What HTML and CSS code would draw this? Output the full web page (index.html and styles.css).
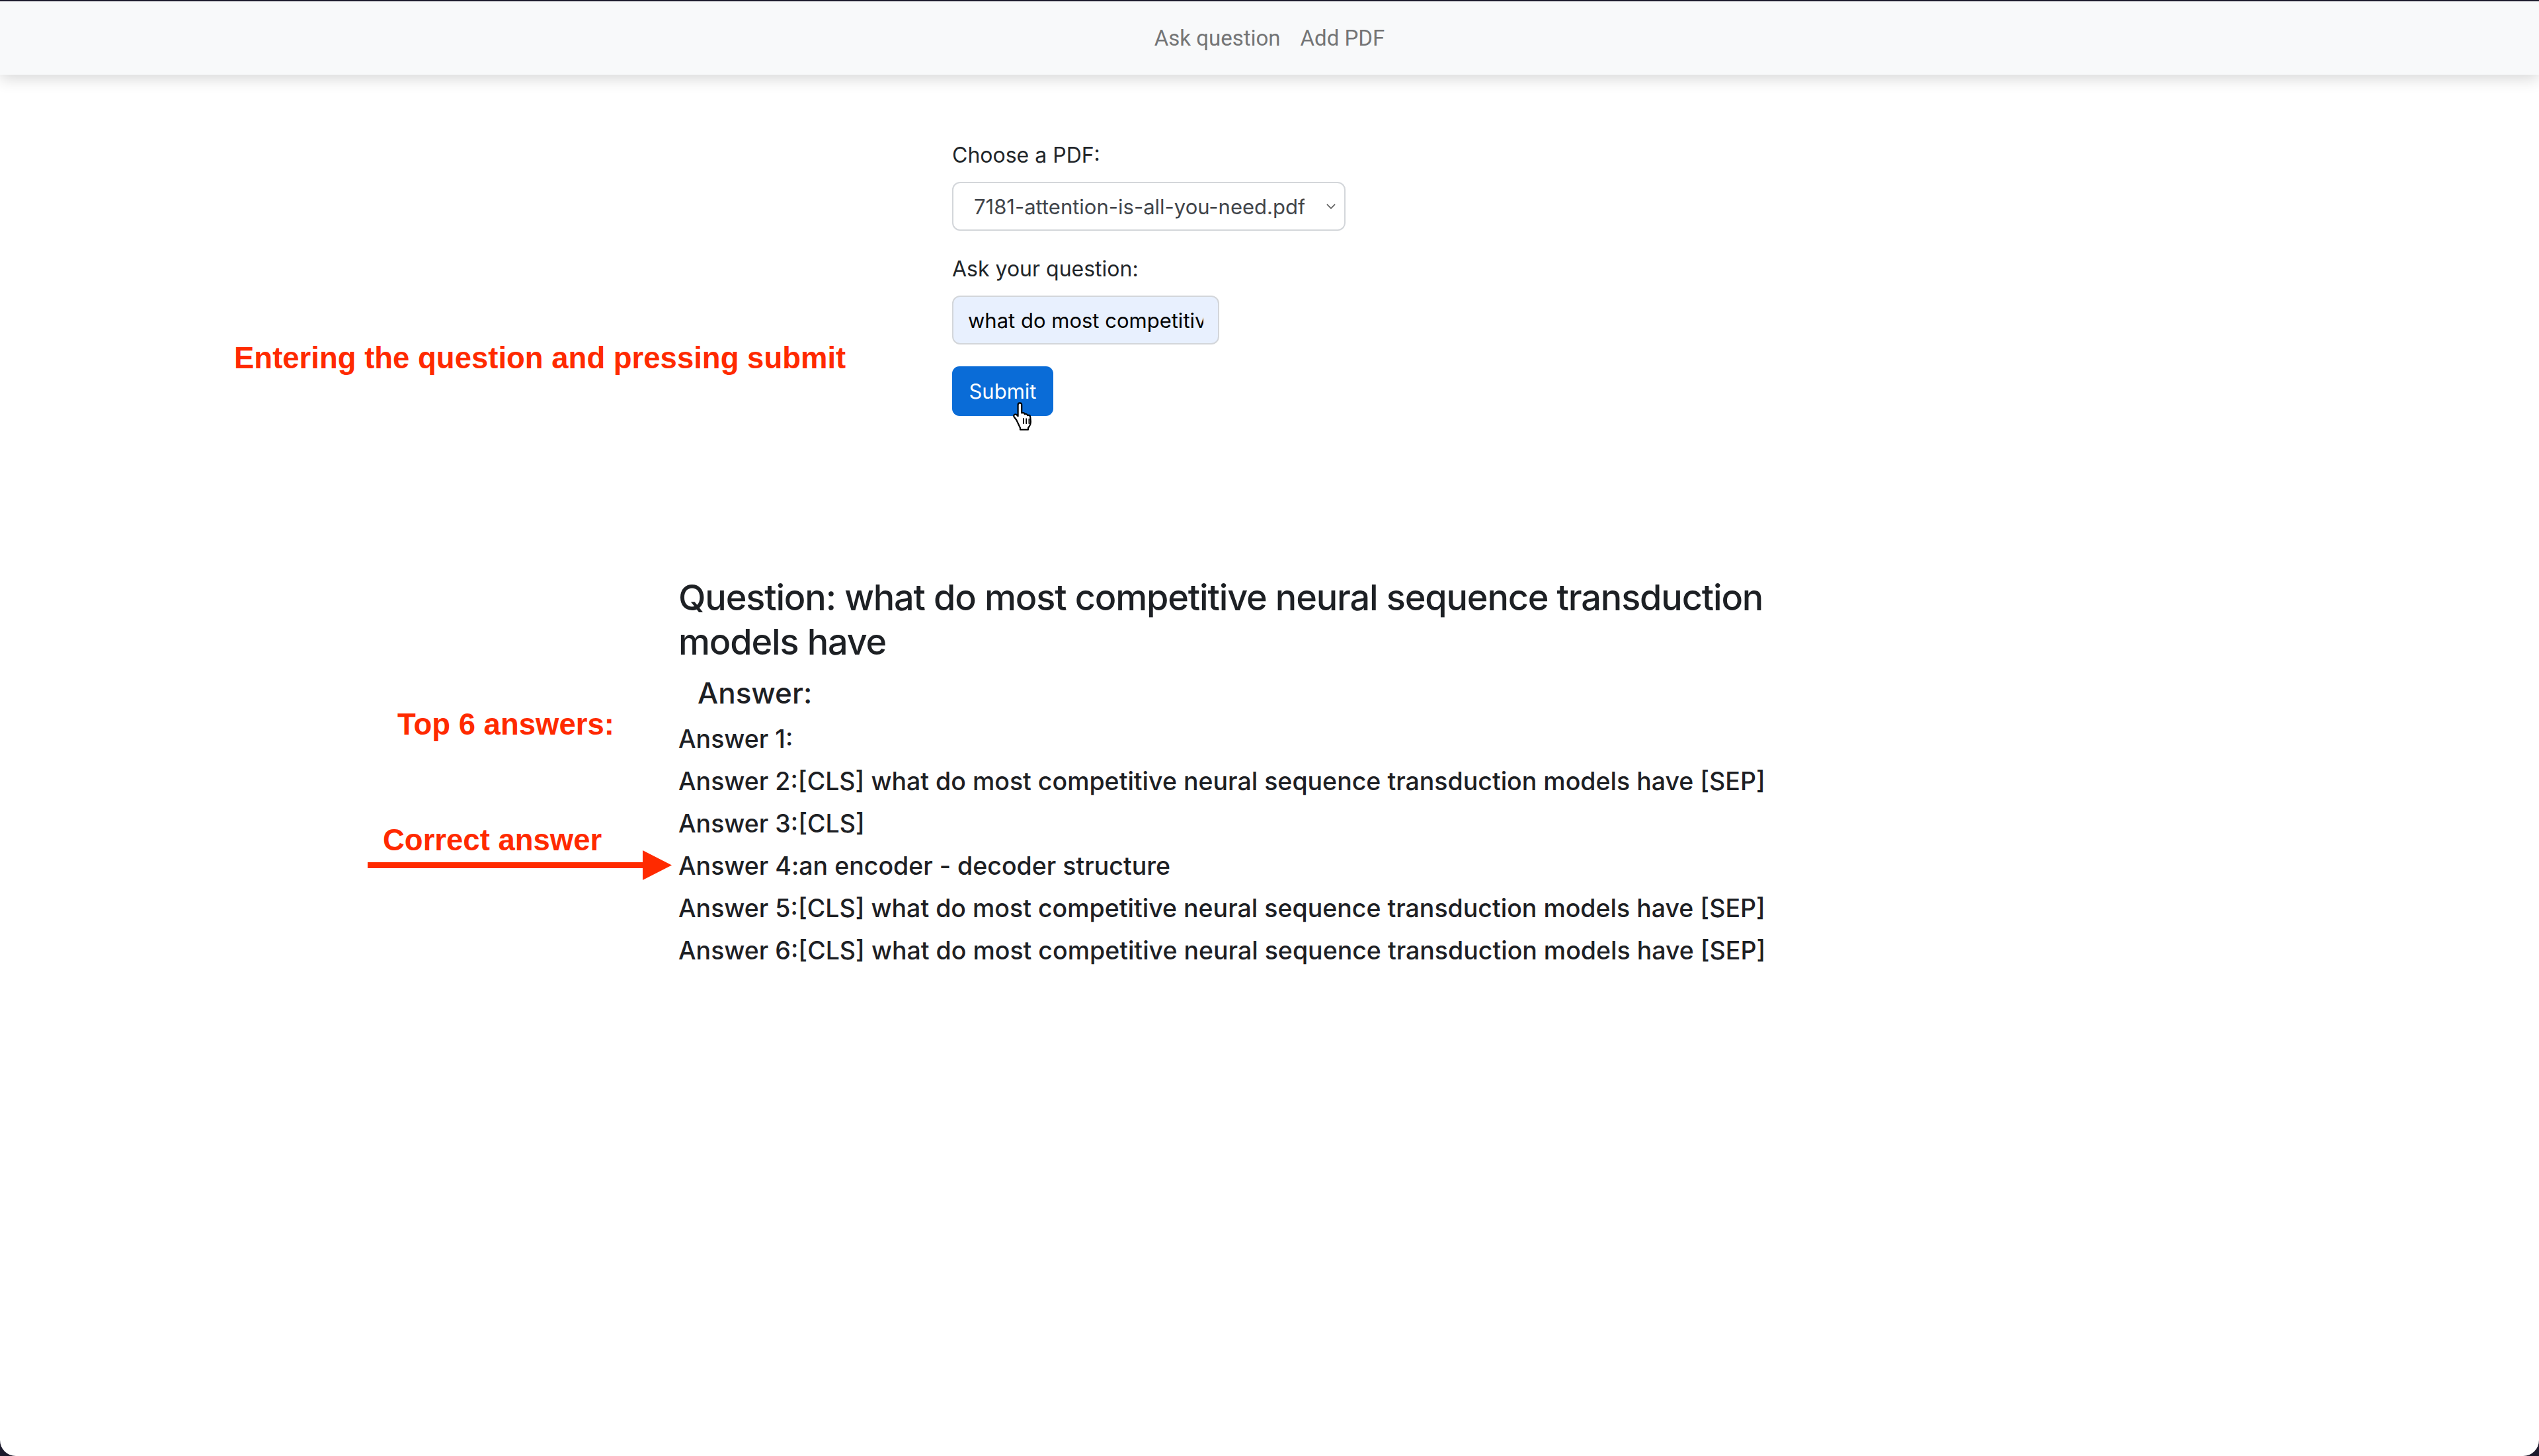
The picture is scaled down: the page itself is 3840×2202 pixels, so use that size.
FILE: index.html
```html
<!DOCTYPE html>
<html lang="en">
<head>
<meta charset="utf-8">
<title>Ask question</title>
<link rel="stylesheet" href="styles.css">
</head>
<body>
<div class="window">
  <nav class="navbar">
    <a class="nav-link" href="#">Ask question</a>
    <a class="nav-link" href="#">Add PDF</a>
  </nav>

  <form class="ask-form">
    <label class="form-label" for="pdf">Choose a PDF:</label>
    <select id="pdf" class="form-select">
      <option>7181-attention-is-all-you-need.pdf</option>
    </select>
    <label class="form-label" for="q">Ask your question:</label>
    <input id="q" class="form-input" type="text" value="what do most competitive neural sequence transduction models have">
    <div class="btn-row">
      <button type="button" class="btn-primary">Submit</button>
      <svg class="cursor" width="34" height="44" viewBox="0 0 17 22">
        <path d="M5.2 1.2c.8 0 1.4.6 1.4 1.4v6.2l.3-.1c.7-.3 1.5 0 1.8.6l.2.4.3-.1c.7-.2 1.4.1 1.7.7l.2.3.4-.1c.8-.1 1.5.4 1.6 1.2l.3 3.4c.1 1.4-.3 2.8-1.1 3.9l-.8 1.1v1.3H5.5v-1.3L2.6 14c-.6-.8-1.3-1.5-1.8-2.3-.4-.7-.1-1.5.6-1.8.6-.2 1.2 0 1.6.4l.8.9V2.6c0-.8.6-1.4 1.4-1.4z" fill="#fff" stroke="#000" stroke-width="1.1" stroke-linejoin="round"/>
        <path d="M8 13v3.6M10.1 13.2v3.4M12.2 13.4v3.2" stroke="#000" stroke-width="0.9" stroke-linecap="round"/>
      </svg>
    </div>
  </form>

  <section class="results">
    <h3 class="question">Question: what do most competitive neural sequence transduction models have</h3>
    <h4 class="answer-title">Answer:</h4>
    <p class="ans">Answer 1:</p>
    <p class="ans">Answer 2:[CLS] what do most competitive neural sequence transduction models have [SEP]</p>
    <p class="ans">Answer 3:[CLS]</p>
    <p class="ans">Answer 4:an encoder - decoder structure</p>
    <p class="ans">Answer 5:[CLS] what do most competitive neural sequence transduction models have [SEP]</p>
    <p class="ans">Answer 6:[CLS] what do most competitive neural sequence transduction models have [SEP]</p>
  </section>

  <div class="note note-enter">Entering the question and pressing submit</div>
  <div class="note note-top">Top 6 answers:</div>
  <div class="note note-correct">Correct answer</div>
  <svg class="arrow" width="460" height="46" viewBox="0 0 460 46">
    <rect x="0" y="18" width="420" height="9" fill="#ff2a00"/>
    <polygon points="416,0 460,22.5 416,45" fill="#ff2a00"/>
  </svg>
</div>
</body>
</html>
```

FILE: styles.css
```css
html, body {
  margin: 0;
  padding: 0;
}

body {
  background: #1d1b2d;
  font-family: "Inter", "Liberation Sans", sans-serif;
  color: #212529;
}

.window {
  position: relative;
  margin-top: 2px;
  height: 2200px;
  background: #ffffff;
  border-radius: 0 0 24px 24px;
  overflow: hidden;
}

.navbar {
  height: 111px;
  background: #f8f9fa;
  display: flex;
  justify-content: center;
  align-items: center;
  box-shadow: 0 6px 22px rgba(0, 0, 0, 0.16);
  position: relative;
  z-index: 1;
}

.nav-link {
  font-family: "Roboto", "Liberation Sans", sans-serif;
  font-size: 33px;
  color: #747576;
  text-decoration: none;
  padding: 0 15px;
}

.ask-form {
  width: 960px;
  margin: 98px auto 0;
  display: flex;
  flex-direction: column;
  align-items: flex-start;
}

.form-label {
  font-size: 32px;
  line-height: 48px;
  margin-bottom: 16px;
  color: #212529;
}

.form-select {
  -webkit-appearance: none;
  appearance: none;
  width: 595px;
  height: 74px;
  padding: 0 60px 0 31px;
  font-family: "Inter", "Liberation Sans", sans-serif;
  font-size: 31px;
  color: #41454b;
  background: #fff url("data:image/svg+xml;utf8,<svg xmlns='http://www.w3.org/2000/svg' width='16' height='10' viewBox='0 0 16 10'><path d='M2 2l6 6 6-6' fill='none' stroke='%23555' stroke-width='1.6'/></svg>") no-repeat right 12px center;
  border: 2px solid #d3d6da;
  border-radius: 12px;
  margin-bottom: 34px;
}

.form-input {
  box-sizing: border-box;
  width: 404px;
  height: 74px;
  padding: 0 22px;
  font-family: "Inter", "Liberation Sans", sans-serif;
  font-size: 31px;
  color: #000;
  background: #e8f0fe;
  border: 2px solid #d3d6da;
  border-radius: 12px;
  margin-bottom: 33px;
}

.btn-row {
  position: relative;
}

.btn-primary {
  width: 153px;
  height: 75px;
  font-family: "Inter", "Liberation Sans", sans-serif;
  font-size: 31px;
  color: #fff;
  background: #0a6cd7;
  border: none;
  border-radius: 11px;
  padding: 0;
}

.cursor {
  position: absolute;
  left: 92px;
  top: 53px;
}

.results {
  margin: 241px 0 0 1026px;
  width: 1720px;
}

.question {
  margin: 0 0 18px;
  font-size: 54px;
  line-height: 67px;
  font-weight: 500;
  color: #1d2024;
  letter-spacing: -1.15px;
}

.answer-title {
  margin: 0 0 19px 29px;
  font-size: 44px;
  line-height: 53px;
  font-weight: 500;
  color: #1d2024;
}

.ans {
  margin: 0 0 16px;
  font-size: 37.5px;
  line-height: 48px;
  font-weight: 500;
  color: #1d2024;
  white-space: nowrap;
}

.note {
  position: absolute;
  font-family: "Liberation Sans", "Arial", sans-serif;
  font-weight: bold;
  font-size: 45.5px;
  line-height: 50px;
  color: #ff2a00;
  white-space: nowrap;
}

.note-enter {
  left: 354px;
  top: 515px;
}

.note-top {
  left: 601px;
  top: 1069px;
}

.note-correct {
  left: 579px;
  top: 1244px;
}

.arrow {
  position: absolute;
  left: 556px;
  top: 1284px;
}
```
